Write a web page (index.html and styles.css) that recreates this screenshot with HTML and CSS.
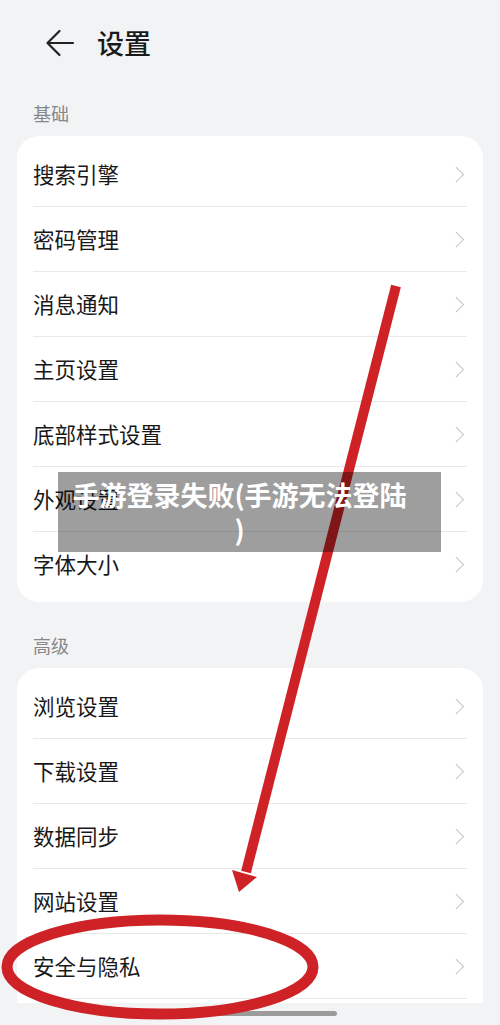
FILE: index.html
```html
<!DOCTYPE html>
<html lang="zh-CN">
<head>
<meta charset="utf-8">
<title>设置</title>
<link rel="stylesheet" href="styles.css">
</head>
<body>
<div class="screen">
  <div class="viewport">
    <header class="topbar">
      <svg class="back" width="30" height="28" viewBox="0 0 30 28">
        <path d="M28 14H2.5M14.5 2L2.5 14L14.5 26" fill="none" stroke="#222" stroke-width="2.2" stroke-linecap="round" stroke-linejoin="round"/>
      </svg>
      <h1 class="title">设置</h1>
    </header>

    <div class="section-label">基础</div>
    <div class="card">
      <div class="row"><span>搜索引擎</span><i class="chev"></i></div>
      <div class="row"><span>密码管理</span><i class="chev"></i></div>
      <div class="row"><span>消息通知</span><i class="chev"></i></div>
      <div class="row"><span>主页设置</span><i class="chev"></i></div>
      <div class="row"><span>底部样式设置</span><i class="chev"></i></div>
      <div class="row"><span>外观设置</span><i class="chev"></i></div>
      <div class="row"><span>字体大小</span><i class="chev"></i></div>
    </div>

    <div class="section-label second">高级</div>
    <div class="card card-open">
      <div class="row"><span>浏览设置</span><i class="chev"></i></div>
      <div class="row"><span>下载设置</span><i class="chev"></i></div>
      <div class="row"><span>数据同步</span><i class="chev"></i></div>
      <div class="row"><span>网站设置</span><i class="chev"></i></div>
      <div class="row"><span>安全与隐私</span><i class="chev"></i></div>
    </div>
  </div>
  <div class="home-area"><div class="home-bar"></div></div>

  <svg class="annot" width="500" height="1025" viewBox="0 0 500 1025">
    <line x1="396" y1="286" x2="246" y2="872" stroke="#cf2227" stroke-width="10"/>
    <polygon points="232,870 257,877 239,892" fill="#cf2227"/>
    <ellipse cx="160" cy="967" rx="153" ry="47" fill="none" stroke="#cf2227" stroke-width="11"/>
  </svg>

  <div class="banner">手游登录失败(手游无法登陆<br>)</div>
</div>
</body>
</html>
```

FILE: styles.css
```css
* { box-sizing: border-box; margin: 0; padding: 0; }

html, body {
  width: 500px;
  height: 1025px;
  background: #f1f3f5;
  font-family: "Noto Sans CJK SC", "Noto Sans", sans-serif;
  color: #191919;
  overflow: hidden;
}

.screen {
  position: relative;
  width: 500px;
  height: 1025px;
}

.viewport {
  height: 1003px;
  overflow: hidden;
}

.topbar {
  height: 86px;
  display: flex;
  align-items: center;
  padding-left: 45px;
  gap: 22px;
}

.back { display: block; }

.title {
  font-size: 27px;
  font-weight: 500;
  line-height: 36px;
  color: #1a1a1a;
}

.section-label {
  padding: 15px 0 11px 33px;
  font-size: 18px;
  line-height: 24px;
  color: #878787;
}

.section-label.second { padding-top: 31px; }

.card {
  margin: 0 17px;
  background: #fff;
  border-radius: 22px;
  padding: 6px 16px;
}

.card-open {
  border-radius: 22px 22px 0 0;
  padding-bottom: 40px;
}

.row {
  height: 65px;
  display: flex;
  align-items: center;
  justify-content: space-between;
  border-bottom: 1px solid #e9e9e9;
  font-size: 21.5px;
  line-height: 30px;
}

.card:not(.card-open) .row:last-child {
  border-bottom: none;
  height: 64px;
}

.chev {
  display: block;
  width: 10.5px;
  height: 10.5px;
  border-top: 1.8px solid #c2c2c2;
  border-right: 1.8px solid #c2c2c2;
  transform: rotate(45deg);
  margin-right: 6px;
}

.home-area {
  height: 22px;
  display: flex;
  justify-content: center;
  padding-top: 8px;
}

.home-bar {
  width: 174px;
  height: 5px;
  border-radius: 3px;
  background: #9b9b9b;
}

.annot {
  position: absolute;
  left: 0;
  top: 0;
  pointer-events: none;
}

.banner {
  position: absolute;
  left: 58px;
  top: 472px;
  width: 383px;
  height: 80px;
  padding: 5px 20px 5px 0;
  background: rgba(0, 0, 0, 0.38);
  color: #fff;
  font-size: 27px;
  font-weight: 700;
  line-height: 35px;
  text-align: center;
}
```
